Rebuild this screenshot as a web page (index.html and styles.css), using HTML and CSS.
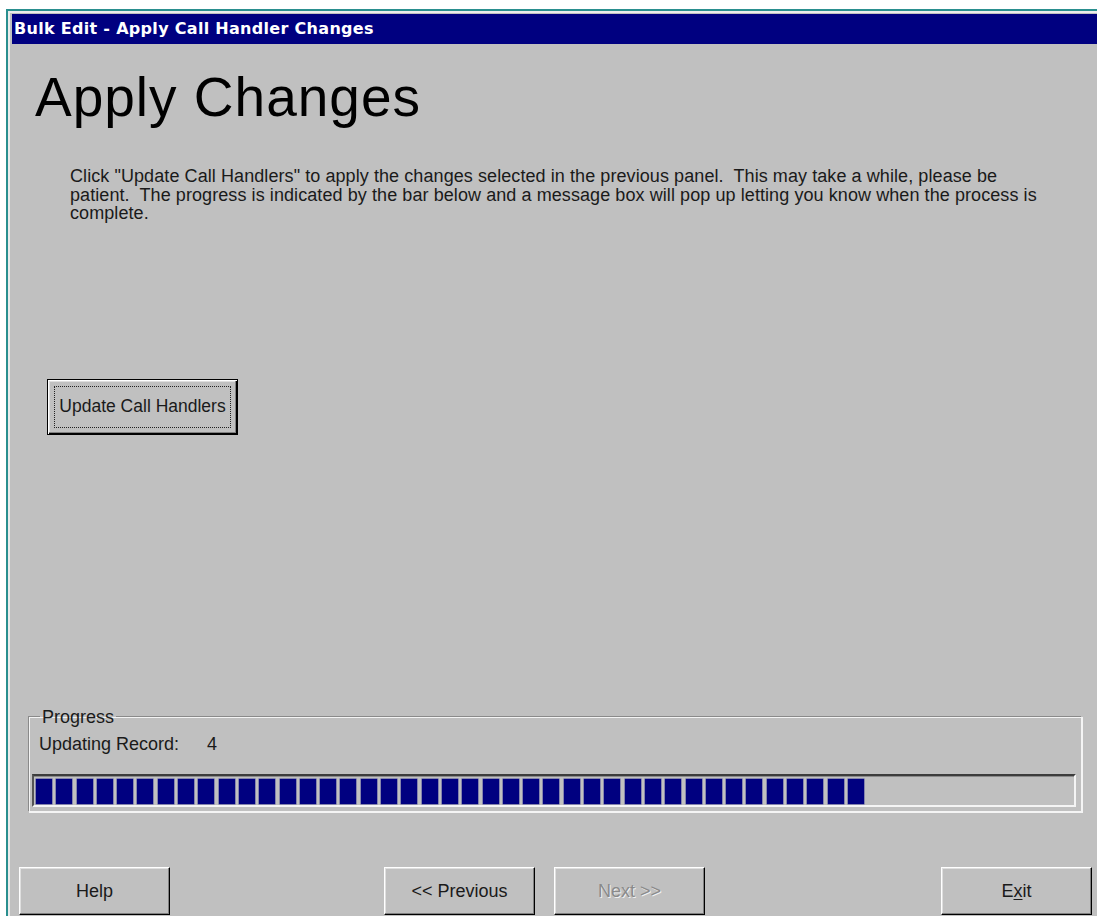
FILE: index.html
```html
<!DOCTYPE html>
<html lang="en">
<head>
<meta charset="utf-8">
<title>Bulk Edit - Apply Call Handler Changes</title>
<link rel="stylesheet" href="styles.css">
</head>
<body>
<div class="window">
  <div class="frame">
    <div class="titlebar">Bulk Edit - Apply Call Handler Changes</div>
    <div class="panel">
      <h1 class="heading">Apply Changes</h1>
      <p class="intro">Click "Update Call Handlers" to apply the changes selected in the previous panel.&nbsp; This may take a while, please be<br>patient.&nbsp; The progress is indicated by the bar below and a message box will pop up letting you know when the process is<br>complete.</p>

      <button class="btn btn-default" type="button"><span class="focus">Update Call Handlers</span></button>

      <fieldset class="group">
        <legend class="group-title">Progress</legend>
        <div class="status"><span class="status-label">Updating Record:</span><span class="status-value">4</span></div>
        <div class="progress">
          <span class="chunk"></span><span class="chunk"></span><span class="chunk"></span><span class="chunk"></span><span class="chunk"></span>
          <span class="chunk"></span><span class="chunk"></span><span class="chunk"></span><span class="chunk"></span><span class="chunk"></span>
          <span class="chunk"></span><span class="chunk"></span><span class="chunk"></span><span class="chunk"></span><span class="chunk"></span>
          <span class="chunk"></span><span class="chunk"></span><span class="chunk"></span><span class="chunk"></span><span class="chunk"></span>
          <span class="chunk"></span><span class="chunk"></span><span class="chunk"></span><span class="chunk"></span><span class="chunk"></span>
          <span class="chunk"></span><span class="chunk"></span><span class="chunk"></span><span class="chunk"></span><span class="chunk"></span>
          <span class="chunk"></span><span class="chunk"></span><span class="chunk"></span><span class="chunk"></span><span class="chunk"></span>
          <span class="chunk"></span><span class="chunk"></span><span class="chunk"></span><span class="chunk"></span><span class="chunk"></span>
          <span class="chunk"></span>
        </div>
      </fieldset>

      <div class="nav">
        <button class="btn nav-btn nav-help" type="button">Help</button>
        <button class="btn nav-btn nav-prev" type="button">&lt;&lt; Previous</button>
        <button class="btn nav-btn nav-next" type="button" disabled>Next &gt;&gt;</button>
        <button class="btn nav-btn nav-exit" type="button">E<u>x</u>it</button>
      </div>
    </div>
  </div>
</div>
</body>
</html>
```
FILE: styles.css
```css
html, body {
  margin: 0;
  padding: 0;
}

body {
  background: #ffffff;
  height: 916px;
  overflow: hidden;
  font-family: "Liberation Sans", Arial, sans-serif;
  color: #1a1a1a;
}

/* outer window edge */
.window {
  margin: 9px 0 0 6px;
  border-top: 2px solid #2a8f8f;
  border-left: 2px solid #2a8f8f;
  height: 905px;
}

.frame {
  border-top: 2px solid #ececec;
  border-left: 2px solid #ececec;
  padding: 1px 0 0 2px;
  background: #c0c0c0;
  height: 100%;
  box-sizing: border-box;
}

.titlebar {
  height: 30px;
  line-height: 30px;
  background: #000080;
  color: #ffffff;
  font-family: "DejaVu Sans", sans-serif;
  font-weight: bold;
  font-size: 16px;
  letter-spacing: 0.3px;
  padding-left: 2px;
  white-space: nowrap;
}

.panel {
  display: flex;
  flex-direction: column;
  align-items: flex-start;
}

.heading {
  margin: 21px 0 0 23px;
  font-weight: normal;
  font-size: 55px;
  line-height: 64px;
  letter-spacing: 1px;
  color: #000;
}

.intro {
  margin: 38px 0 0 58px;
  font-size: 18px;
  line-height: 18.5px;
  letter-spacing: 0.08px;
  white-space: nowrap;
}

/* classic 3D push button */
.btn {
  font-family: "Liberation Sans", Arial, sans-serif;
  font-size: 18px;
  color: #1a1a1a;
  background: #c0c0c0;
  border-top: 1px solid #ffffff;
  border-left: 1px solid #ffffff;
  border-right: 1px solid #000000;
  border-bottom: 1px solid #000000;
  box-shadow: inset -1px -1px 0 #808080, inset 1px 1px 0 #dfdfdf;
  padding: 0;
  margin: 0;
}

.btn-default {
  margin: 156px 0 0 35px;
  width: 191px;
  height: 56px;
  border: 1px solid #000;
  box-shadow: inset 1px 1px 0 #ffffff, inset -1px -1px 0 #000000, inset -2px -2px 0 #808080, inset 2px 2px 0 #dfdfdf;
  display: flex;
  padding: 6px;
  font-size: 17.5px;
}

.focus {
  flex: 1;
  display: flex;
  align-items: center;
  justify-content: center;
  border: 1px dotted #222;
  white-space: nowrap;
}

/* etched group box */
.group {
  margin: 273px 0 0 16px;
  width: 1054px;
  box-sizing: border-box;
  padding: 0 0 4px 0;
  border-style: solid;
  border-width: 1px;
  border-color: #8a8a8a #f4f4f4 #f4f4f4 #8a8a8a;
  box-shadow: inset 1px 1px 0 #f4f4f4, 1px 1px 0 #f4f4f4;
  min-width: 0;
}

.group-title {
  margin-left: 11px;
  padding: 0 2px;
  font-size: 18px;
  line-height: 18px;
}

.status {
  margin: 9px 0 0 10px;
  font-size: 18px;
  line-height: 18px;
  display: flex;
}

.status-label {
  width: 168px;
}

.progress {
  margin: 21px 5px 0 3px;
  height: 33px;
  box-sizing: border-box;
  border-top: 2px solid #3c3c3c;
  border-left: 2px solid #555555;
  border-bottom: 2px solid #f4f4f4;
  border-right: 2px solid #f4f4f4;
  box-shadow: inset 0 1px 0 #8a8a8a;
  padding: 3px 0 0 2px;
  display: flex;
  gap: 4.3px;
}

.chunk {
  width: 16px;
  height: 25px;
  background: #000080;
  box-shadow: 0 0 0 0.5px #4a4a9a;
  flex: none;
}

/* wizard navigation */
.nav {
  margin: 55px 0 0 7px;
  display: flex;
}

.nav-btn {
  width: 151px;
  height: 48px;
  padding-top: 2px;
}

.nav-prev {
  margin-left: 214px;
}

.nav-next {
  margin-left: 19px;
  color: #8a8a8a;
  text-shadow: 1px 1px 0 #f0f0f0;
}

.nav-exit {
  margin-left: 236px;
}

.nav-exit u {
  text-decoration-thickness: 1px;
  text-underline-offset: 2px;
}
```
